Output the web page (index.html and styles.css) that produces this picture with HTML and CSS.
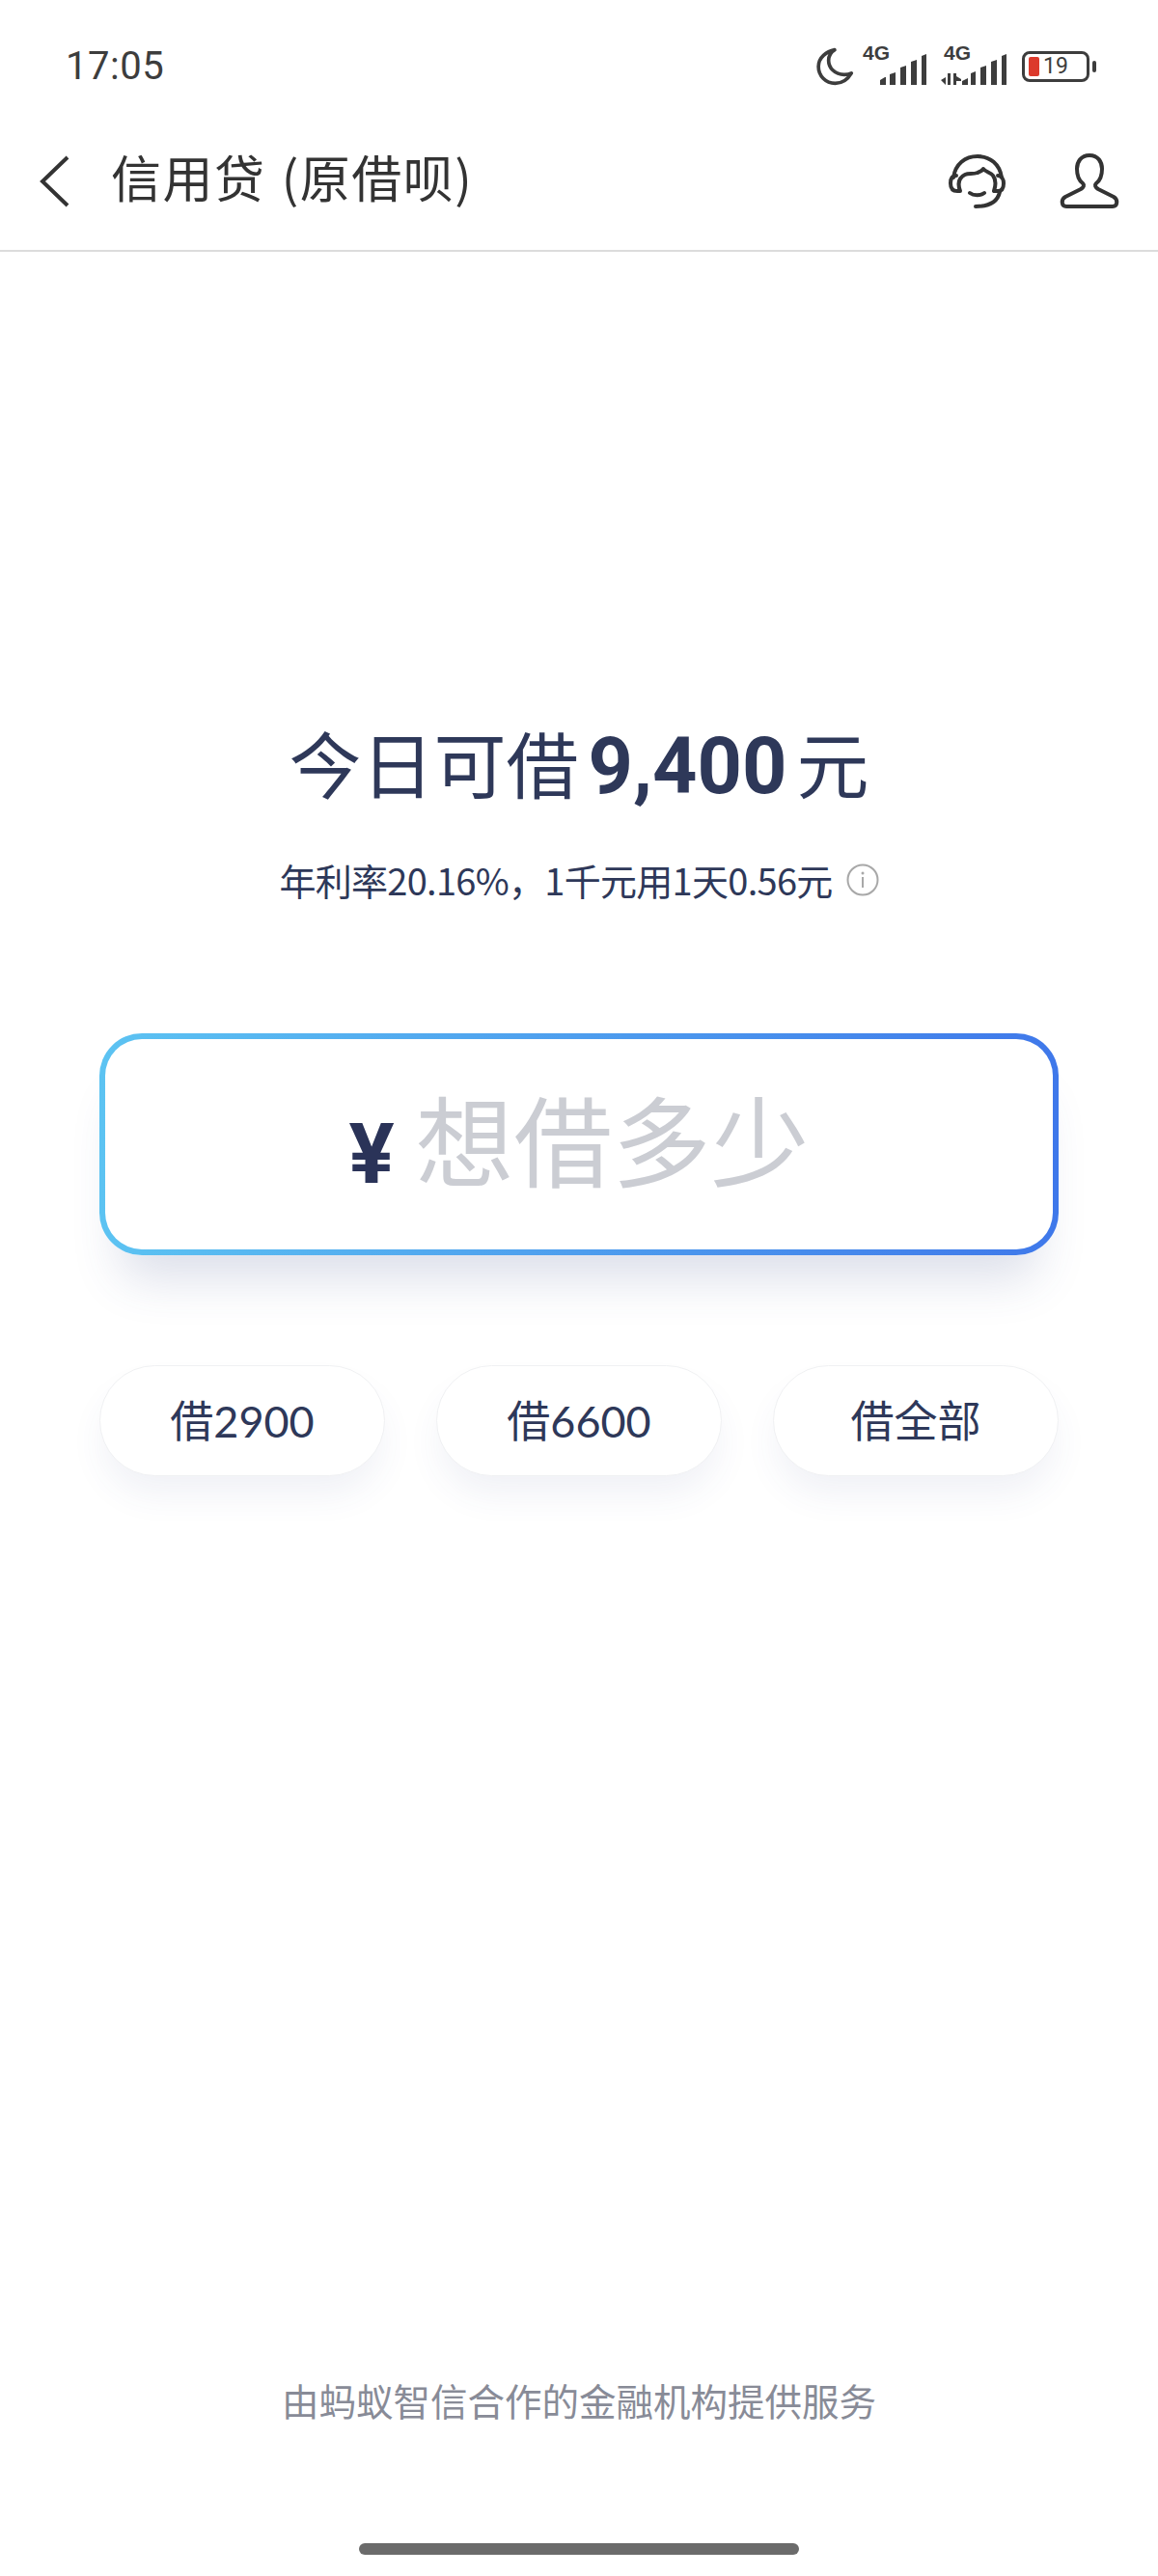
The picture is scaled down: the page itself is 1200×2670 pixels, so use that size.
FILE: index.html
```html
<!DOCTYPE html>
<html lang="zh">
<head>
<meta charset="utf-8">
<title>信用贷</title>
<link rel="stylesheet" href="styles.css">
</head>
<body>
<div class="page">
  <div class="status">
    <span class="time">17:05</span>
    <div class="status-icons">
      <svg class="ic-moon" width="42" height="42" viewBox="0 0 40 40"><path d="M19 3.500C11 5 3 11 3 20c0 9 7 16.500 16.500 16.500 7 0 12.500-4 16-10-2 1-4.500 1.500-7 1.500C19 28 13 21 13 14c0-4 2-8 6-10.500z" fill="none" stroke="#3d3d3d" stroke-width="3.500" stroke-linejoin="round"/></svg>
      <div class="sig">
        <span class="sig-label">4G</span>
        <svg width="66" height="34" viewBox="0 0 66 34"><g fill="#3d3d3d"><path d="M17 33v-5l5-3h1v8zM27 33V22l6-2v13zM38 33V15l6-2v20zM49 33V9l6-2v26zM60 33V3l5-2v32z"/></g></svg>
      </div>
      <div class="sig sig2">
        <span class="sig-label">4G</span>
        <svg width="70" height="34" viewBox="0 0 70 34"><g fill="#3d3d3d"><path d="M0 28l5-3v8zM7 21h3v12H7zM13 21h3v12h-3zM16 24l5 3v2l-5 0zM22 33v-4l6-3v7zM31 33V21l5-2v14zM41 33V15l6-2v20zM52 33V9l6-2v26zM63 33V3l5-2v32z"/></g></svg>
      </div>
      <div class="batt">
        <div class="batt-body"><span class="batt-fill"></span><span class="batt-num">19</span></div>
        <span class="batt-cap"></span>
      </div>
    </div>
  </div>

  <header class="nav">
    <svg class="back" width="34" height="54" viewBox="0 0 34 54"><path d="M30 2 4 27l26 25" fill="none" stroke="#333" stroke-width="4"/></svg>
    <h1 class="title">信用贷 (原借呗)</h1>
    <div class="nav-actions">
      <svg width="62" height="58" viewBox="0 0 62 58" fill="none" stroke="#333" stroke-width="4" stroke-linecap="round" stroke-linejoin="round"><path d="M6 25C8 11 18 3 31 3s23 8 25 22"/><path d="M9 23c-4 0-6 3-6 8 0 6 3 8 7 8h3c-3-8-1-14 5-17 4-2 8 0 13-2 3-1 5-2 6-4 2 3 8 4 10 7 3 4 3 10 1 16h4c4 0 6-3 6-8 0-4-2-8-6-8"/><path d="M23 41c4 3 11 3 15 0"/><path d="M54 40c-2 9-9 15-25 15"/></svg>
      <svg width="62" height="58" viewBox="0 0 62 58" fill="none" stroke="#333" stroke-width="4" stroke-linejoin="round"><path d="M31 2c-9 0-13 7-13 14 0 6 2 12 6 15 2 2 1 4-2 6L6 45c-5 3-4 10 1 10h48c5 0 6-7 1-10L40 37c-3-2-4-4-2-6 4-3 6-9 6-15 0-7-4-14-13-14z"/></svg>
    </div>
  </header>

  <main class="main">
    <h2 class="headline"><span>今日可借</span><b class="amount">9,400</b><span>元</span></h2>
    <p class="rate"><span>年利率20.16%，1千元用1天0.56元</span>
      <svg class="info" width="34" height="34" viewBox="0 0 34 34"><circle cx="17" cy="17" r="15.500" fill="none" stroke="#a8a8a8" stroke-width="2"/><circle cx="17" cy="10" r="1.500" fill="#a8a8a8"/><rect x="16" y="14" width="2" height="11" fill="#a8a8a8"/></svg>
    </p>

    <div class="field">
      <div class="field-inner">
        <span class="yen">¥</span>
        <span class="placeholder">想借多少</span>
      </div>
    </div>

    <div class="chips">
      <button class="chip">借2900</button>
      <button class="chip">借6600</button>
      <button class="chip">借全部</button>
    </div>
  </main>

  <footer class="foot">
    <p class="foot-text">由蚂蚁智信合作的金融机构提供服务</p>
    <div class="home"></div>
  </footer>
</div>
</body>
</html>
```

FILE: styles.css
```css
* { box-sizing: border-box; }
html, body { margin: 0; padding: 0; background: #fff; }
body { font-family: "Noto Sans CJK SC", "Noto Sans", sans-serif; }
.page { width: 1200px; height: 2670px; display: flex; flex-direction: column; }

.status { height: 130px; flex: none; display: flex; align-items: center; justify-content: space-between; padding: 4px 64px 0 68px; }
.time { font-family: Roboto, "Liberation Sans", sans-serif; font-size: 40px; color: #3d3d3d; letter-spacing: 0.5px; margin-top: 2px; }
.status-icons { display: flex; align-items: center; gap: 8px; margin-top: 3px; }
.sig { position: relative; width: 66px; height: 40px; display: flex; align-items: flex-end; }
.sig2 { width: 70px; margin-left: 6px; }
.sig-label { position: absolute; left: -1px; top: -5px; font: 700 21px/22px "Liberation Sans", sans-serif; color: #3d3d3d; }
.sig2 .sig-label { left: 3px; }
.batt { display: flex; align-items: center; gap: 3px; margin-left: 6px; }
.batt-body { width: 70px; height: 32px; border: 3px solid #3d3d3d; border-radius: 8px; display: flex; align-items: center; padding-left: 4px; gap: 4px; }
.batt-fill { width: 11px; height: 20px; background: #dc3a2c; border-radius: 2px; }
.batt-num { font: 400 23px/1 Roboto, sans-serif; color: #3d3d3d; }
.batt-cap { width: 4px; height: 12px; background: #3d3d3d; border-radius: 2px; }

.nav { height: 131px; flex: none; display: flex; align-items: center; padding: 0 40px 14px 40px; border-bottom: 2px solid #dcdcdc; }
.back { flex: none; }
.title { margin: -10px 0 0 41px; font-size: 52px; font-weight: 400; color: #333; line-height: 70px; word-spacing: 3px; letter-spacing: 1.500px; }
.nav-actions { margin-left: auto; display: flex; gap: 54px; margin-top: 0; }

.main { flex: 1; display: flex; flex-direction: column; padding: 0 103px; }
.headline { margin: 0; padding-top: 473px; display: flex; justify-content: center; align-items: baseline; font-size: 75px; font-weight: 400; color: #2e3859; line-height: 112px; gap: 10px; letter-spacing: 0; }
.amount { font-family: Roboto, "Liberation Sans", sans-serif; font-weight: 700; font-size: 81px; }
.rate { margin: 33px 0 0; display: flex; justify-content: center; align-items: center; gap: 14px; font-size: 38px; line-height: 56px; color: #2e3859; letter-spacing: -0.700px; }
.field { margin-top: 131px; height: 230px; border-radius: 44px; padding: 6px; background: linear-gradient(90deg, #5cc3f2 0%, #3f78ea 100%); box-shadow: 0 46px 50px -22px rgba(60, 80, 140, 0.18); }
.field-inner { height: 100%; background: #fff; border-radius: 38px; display: flex; align-items: center; justify-content: center; gap: 22px; }
.yen { font: 700 88px/1 Roboto, "Liberation Sans", sans-serif; color: #2a3358; margin-top: 20px; }
.placeholder { font-size: 102px; line-height: 120px; color: #cbcdd3; margin-top: -14px; }
.chips { margin-top: 114px; display: flex; justify-content: space-between; }
.chip { width: 296px; height: 115px; border: 1px solid #f0f1f3; border-radius: 58px; background: #fff; font-family: Lato, "Noto Sans CJK SC", sans-serif; font-size: 45px; color: #2e3859; box-shadow: 0 22px 36px -4px rgba(60, 80, 140, 0.08); padding: 0 0 4px; }

.foot { flex: none; display: flex; flex-direction: column; align-items: center; }
.foot-text { margin: 0; font-size: 38.500px; line-height: 56px; color: #888b97; }
.home { width: 456px; height: 12px; margin: 121px 0 22px; background: #6b6b6b; border-radius: 6px; }
```
